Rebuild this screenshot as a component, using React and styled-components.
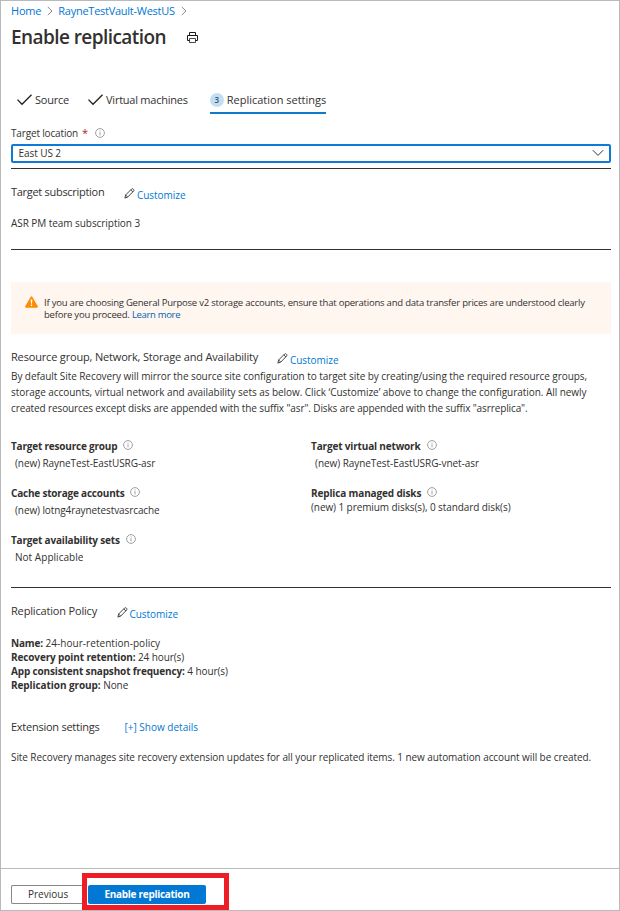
import React from 'react';
import styled, { createGlobalStyle } from 'styled-components';

const GlobalStyle = createGlobalStyle`
  * { box-sizing: border-box; }
  body { margin: 0; background: #fff; }
`;

const Page = styled.div`
  width: 620px;
  height: 911px;
  border: 1px solid #bababa;
  display: flex;
  flex-direction: column;
  font-family: "Open Sans", "Noto Sans", sans-serif;
  font-size: 10px;
  line-height: 14px;
  color: #323130;
  background: #fff;
  overflow: hidden;
  white-space: nowrap;
`;

const Content = styled.main`
  flex: 1;
  padding: 2px 8px 0 10px;
  display: flex;
  flex-direction: column;
`;

const Text = styled.span`
  letter-spacing: ${(p) => p.$track || 0}px;
`;

const Strong = styled.strong`
  font-weight: 700;
  letter-spacing: ${(p) => p.$track || 0}px;
`;

const Link = styled.a`
  color: #0078d4;
  letter-spacing: ${(p) => p.$track || 0}px;
`;

const Icon = styled.svg`
  display: block;
  flex: none;
  fill: none;
  overflow: visible;
`;

const Breadcrumb = styled.nav`
  display: flex;
  align-items: center;
  height: 16px;
  font-size: 11px;
  line-height: 16px;
`;

const CrumbTrail = styled.span`
  display: flex;
  margin: 0 ${(p) => p.$after || 0}px 0 6px;
`;

const TitleRow = styled.header`
  display: flex;
  align-items: center;
  margin-top: 5px;
  height: 26px;
`;

const Title = styled.h1`
  margin: 0;
  width: 176px;
  font-size: 19px;
  line-height: 26px;
  font-weight: 600;
  letter-spacing: -0.57px;
`;

const Steps = styled.nav`
  display: flex;
  height: 22px;
  margin-top: 42px;
  padding-left: 6px;
  font-size: 11px;
  line-height: 16px;
`;

const Step = styled.div`
  display: flex;
  align-items: flex-start;
  gap: 3px;
  margin-right: ${(p) => p.$after || 0}px;
  border-bottom: ${(p) => (p.$active ? '2px solid #0f7ac9' : '0')};
  font-weight: ${(p) => (p.$active ? 500 : 400)};
  svg { margin-top: 2px; }
`;

const StepBadge = styled.span`
  width: 14px;
  height: 14px;
  margin-top: 1px;
  border-radius: 50%;
  background: #c3def3;
  color: #35597a;
  font-size: 8px;
  font-weight: 600;
  line-height: 14px;
  text-align: center;
`;

const FieldLabel = styled.label`
  display: flex;
  align-items: center;
  margin-top: 12px;
  height: 14px;
`;

const Required = styled.span`
  color: #a4262c;
  font-size: 11px;
  margin: 0 7px 0 4px;
`;

const Select = styled.div`
  display: flex;
  align-items: center;
  justify-content: space-between;
  height: 19px;
  margin-top: 4px;
  padding: 0 5px 1px 5.5px;
  border: 2px solid #0f7ad6;
  border-radius: 2px;
`;

const Rule = styled.hr`
  width: 100%;
  height: 1px;
  margin: ${(p) => p.$before}px 0 0;
  border: 0;
  background: #323130;
  flex: none;
`;

const SectionHead = styled.div`
  display: flex;
  height: 16px;
  margin-top: ${(p) => p.$before}px;
`;

const SectionTitle = styled.h2`
  margin: 0;
  width: ${(p) => p.$width}px;
  font-size: 11px;
  line-height: 16px;
  font-weight: 400;
  letter-spacing: ${(p) => p.$track || 0}px;
`;

const SectionLink = styled(Link)`
  padding-top: 1px;
`;

const Customize = styled.a`
  display: flex;
  gap: 2px;
  color: #0078d4;
  line-height: 14px;
  svg { margin-top: 3.5px; }
  span { margin-top: 3.5px; }
`;

const Line = styled.div`
  height: 14px;
  margin-top: ${(p) => p.$before}px;
`;

const Notice = styled.div`
  display: flex;
  gap: 6px;
  height: 52px;
  margin-top: 32px;
  padding: 14px 0 0 14px;
  background: #fff6f0;
  border-radius: 1px;
  font-size: 9.5px;
  line-height: 12px;
  a { color: #0063b1; }
`;

const NoticeText = styled.div`
  padding-top: 0.5px;
`;

const Paragraph = styled.div`
  display: flex;
  flex-direction: column;
  margin-top: 2.5px;
  margin-bottom: 0.5px;
  line-height: 16px;
`;

const Summary = styled.div`
  display: grid;
  grid-template-columns: 300px 1fr;
  row-gap: 16px;
  margin-top: 23px;
`;

const SummaryLabel = styled.div`
  display: flex;
  gap: 6px;
  height: 14px;
  svg { margin-top: 1px; }
`;

const SummaryValue = styled.div`
  height: 17px;
  padding: ${(p) => (p.$tight ? '0' : '3px 0 0 4px')};
`;

const PolicyList = styled.div`
  display: flex;
  flex-direction: column;
  margin-top: 17px;
`;

const Footer = styled.footer`
  display: flex;
  height: 42px;
  padding: 4px 0 0 10px;
  border-top: 1px solid #bababa;
`;

const PreviousButton = styled.button`
  width: 72px;
  height: 19px;
  margin: 12px 0 0;
  padding: 0 0 0 16px;
  border: 1px solid #8a8886;
  border-right: 0;
  border-radius: 2px 0 0 2px;
  background: #fff;
  color: #323130;
  font: inherit;
  line-height: 17px;
  text-align: left;
`;

const Highlight = styled.div`
  width: 147px;
  height: 37px;
  margin-left: -1px;
  padding: 7px 0 0 1px;
  border: 5px solid #ee1c25;
`;

const EnableButton = styled.button`
  display: block;
  width: 118px;
  height: 19px;
  padding: 0;
  border: 0;
  border-radius: 2px;
  background: #0078d4;
  color: #fff;
  font: inherit;
  font-weight: 700;
  line-height: 19px;
  letter-spacing: -0.3px;
`;

const Crumb = () => (
  <Icon width="6" height="10" viewBox="0 0 6 10" stroke="#8a8886">
    <path d="M0.8 1 5 5 0.8 9" />
  </Icon>
);

const Printer = () => (
  <Icon width="11" height="11" viewBox="0 0 11 11" stroke="#1b1a19">
    <path d="M2.5 3.5V.5H8.5V3.5M2.5 8.5H.5V3.5H10.5V8.5H8.5" />
    <path d="M2.5 6.5H8.5V10.5H2.5Z" strokeWidth=".8" />
  </Icon>
);

const Check = () => (
  <Icon width="15" height="12" viewBox="0 0 15 12" stroke="#201f1e" strokeWidth="1.3">
    <path d="M.5 5.6 5 10.3 14.5.8" />
  </Icon>
);

const Info = () => (
  <Icon width="10" height="10" viewBox="0 0 10 10" stroke="#8a8886" strokeWidth=".8">
    <circle cx="5" cy="5" r="4.4" />
    <path d="M5 4.2V7.4M5 2.5V3.4" />
  </Icon>
);

const Chevron = () => (
  <Icon width="12" height="8" viewBox="0 0 12 8" stroke="#323130">
    <path d="M.8 1.2 6 6.4 11.2 1.2" />
  </Icon>
);

const Pencil = () => (
  <Icon width="11" height="11" viewBox="0 0 11 11" stroke="#323130" strokeWidth=".9">
    <path d="M.9 10.1 1.6 7 7.6 1Q8.4.3 9.3 1.1L9.7 1.5Q10.3 2.3 9.6 3.1L3.7 9.1ZM6.8 1.9 8.9 4M1.7 7.1 3.7 9" />
  </Icon>
);

const Warning = () => (
  <Icon width="13" height="12" viewBox="0 0 13 12">
    <path d="M5.7.7Q6.5-.4 7.3.7L12.7 10.3Q13.2 11.6 12 11.7H1Q-.2 11.6.3 10.3Z" fill="#ff8c00" />
    <path d="M5.7 3.5H7.3L7 7.7H6ZM5.8 8.6H7.2V9.9H5.8Z" fill="#fff" />
  </Icon>
);

const CustomizeLink = () => (
  <Customize>
    <Pencil />
    <Text $track={-0.04}>Customize</Text>
  </Customize>
);

const summary = [
  { label: 'Target resource group', value: '(new) RayneTest-EastUSRG-asr', track: -0.08, labelTrack: -0.2 },
  { label: 'Target virtual network', value: '(new) RayneTest-EastUSRG-vnet-asr', track: -0.06, labelTrack: -0.16 },
  { label: 'Cache storage accounts', value: '(new) lotng4raynetestvasrcache', track: -0.1, labelTrack: -0.2 },
  { label: 'Replica managed disks', value: '(new) 1 premium disks(s), 0 standard disk(s)', track: -0.087, labelTrack: -0.14, tight: true },
  { label: 'Target availability sets', value: 'Not Applicable', track: 0.04, labelTrack: -0.18 },
];

const policy = [
  { label: 'Name:', value: '24-hour-retention-policy', track: 0.034, labelTrack: -0.15 },
  { label: 'Recovery point retention:', value: '24 hour(s)', track: -0.1, labelTrack: -0.13 },
  { label: 'App consistent snapshot frequency:', value: '4 hour(s)', track: -0.09, labelTrack: -0.15 },
  { label: 'Replication group:', value: 'None', track: -0.07, labelTrack: -0.08 },
];

export default function App() {
  return (
    <Page>
      <GlobalStyle />
      <Content>
        <Breadcrumb>
          <Link $track={-0.2}>Home</Link>
          <CrumbTrail $after={5}><Crumb /></CrumbTrail>
          <Link $track={-0.26}>RayneTestVault-WestUS</Link>
          <CrumbTrail><Crumb /></CrumbTrail>
        </Breadcrumb>
        <TitleRow>
          <Title>Enable replication</Title>
          <Printer />
        </TitleRow>
        <Steps>
          <Step $after={19}><Check /><Text $track={-0.22}>Source</Text></Step>
          <Step $after={22}><Check /><Text $track={-0.24}>Virtual machines</Text></Step>
          <Step $active><StepBadge>3</StepBadge>Replication settings</Step>
        </Steps>

        <FieldLabel>
          <Text $track={-0.16}>Target location</Text>
          <Required>*</Required>
          <Info />
        </FieldLabel>
        <Select>
          <Text $track={-0.07}>East US 2</Text>
          <Chevron />
        </Select>
        <Rule $before={5} />

        <SectionHead $before={15}>
          <SectionTitle $width={113} $track={-0.29}>Target subscription</SectionTitle>
          <CustomizeLink />
        </SectionHead>
        <Line $before={16}><Text $track={-0.06}>ASR PM team subscription 3</Text></Line>
        <Rule $before={19} />

        <Notice>
          <Warning />
          <NoticeText>
            <Text $track={-0.215}>If you are choosing General Purpose v2 storage accounts, ensure that operations and data transfer prices are understood clearly</Text>
            <br />
            <Text $track={-0.2}>before you proceed. </Text>
            <Link $track={-0.32}>Learn more</Link>
          </NoticeText>
        </Notice>

        <SectionHead $before={15}>
          <SectionTitle $width={266} $track={-0.17}>Resource group, Network, Storage and Availability</SectionTitle>
          <CustomizeLink />
        </SectionHead>
        <Paragraph>
          <Text $track={-0.067}>By default Site Recovery will mirror the source site configuration to target site by creating/using the required resource groups,</Text>
          <Text $track={-0.048}>storage accounts, virtual network and availability sets as below. Click ‘Customize’ above to change the configuration. All newly</Text>
          <Text $track={-0.114}>created resources except disks are appended with the suffix "asr". Disks are appended with the suffix "asrreplica".</Text>
        </Paragraph>

        <Summary>
          {summary.map((s) => (
            <div key={s.label}>
              <SummaryLabel>
                <Strong $track={s.labelTrack}>{s.label}</Strong>
                <Info />
              </SummaryLabel>
              <SummaryValue $tight={s.tight}><Text $track={s.track}>{s.value}</Text></SummaryValue>
            </div>
          ))}
        </Summary>
        <Rule $before={23} />

        <SectionHead $before={15}>
          <SectionTitle $width={105.5} $track={-0.17}>Replication Policy</SectionTitle>
          <CustomizeLink />
        </SectionHead>
        <PolicyList>
          {policy.map((p) => (
            <div key={p.label}>
              <Strong $track={p.labelTrack}>{p.label}</Strong>{' '}
              <Text $track={p.track}>{p.value}</Text>
            </div>
          ))}
        </PolicyList>

        <SectionHead $before={27}>
          <SectionTitle $width={113.5} $track={-0.25}>Extension settings</SectionTitle>
          <SectionLink>[+] Show details</SectionLink>
        </SectionHead>
        <Line $before={15}>
          <Text $track={-0.083}>Site Recovery manages site recovery extension updates for all your replicated items. 1 new automation account will be created.</Text>
        </Line>
      </Content>
      <Footer>
        <PreviousButton>Previous</PreviousButton>
        <Highlight>
          <EnableButton>Enable replication</EnableButton>
        </Highlight>
      </Footer>
    </Page>
  );
}
